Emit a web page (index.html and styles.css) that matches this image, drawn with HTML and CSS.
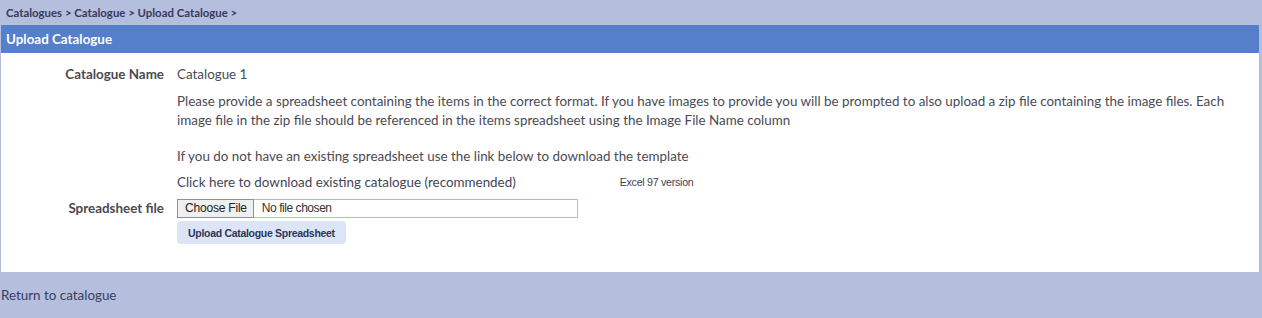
FILE: index.html
```html
<!doctype html>
<html>
<head>
    <meta charset="utf-8">
    <title>Upload Catalogue</title>
    <link rel="stylesheet" href="styles.css">
</head>
<body>
    <div class="breadcrumb">
        <a href="#">Catalogues</a> &gt; <a href="#">Catalogue</a> &gt; <a href="#">Upload Catalogue</a> &gt;
    </div>

    <div class="panel">
        <div class="panel-title">Upload Catalogue</div>
        <div class="panel-body">
            <div class="row">
                <div class="label">Catalogue Name</div>
                <div class="value">Catalogue 1</div>
            </div>
            <div class="row">
                <div class="label"></div>
                <div class="value">
                    <p class="info">Please provide a spreadsheet containing the items in the correct format. If you have images to provide you will be prompted to also upload a zip file containing the image files. Each image file in the zip file should be referenced in the items spreadsheet using the Image File Name column</p>
                    <p class="info">If you do not have an existing spreadsheet use the link below to download the template</p>
                    <div class="download">
                        <a href="#" class="download-link">Click here to download existing catalogue (recommended)</a>
                        <a href="#" class="excel">Excel 97 version</a>
                    </div>
                </div>
            </div>
            <div class="row file-row">
                <div class="label">Spreadsheet file</div>
                <div class="value">
                    <div class="file-input">
                        <span class="choose">Choose File</span>
                        <span class="chosen">No file chosen</span>
                    </div>
                    <button class="upload-btn">Upload Catalogue Spreadsheet</button>
                </div>
            </div>
        </div>
    </div>

    <div class="footer">
        <a href="#">Return to catalogue</a>
    </div>
</body>
</html>
```

FILE: styles.css
```css
html, body {
    margin: 0;
    background-color: #b4bedd;
    font-family: 'Lato', 'Open Sans', sans-serif;
    color: #4a4a55;
}

a {
    color: inherit;
    text-decoration: none;
}

.breadcrumb {
    height: 25px;
    line-height: 25px;
    padding-left: 6px;
    font-size: 11.4px;
    font-weight: bold;
    color: #3a3a5c;
}

.panel {
    margin: 0 3px 0 1px;
    background: #fff;
}

.panel-title {
    height: 28px;
    line-height: 28px;
    padding-left: 5px;
    background: #557ecb;
    color: #fff;
    font-size: 13.4px;
    font-weight: bold;
}

.panel-body {
    padding: 12px 0 28px;
    font-size: 13.4px;
}

.row {
    display: flex;
    gap: 13px;
}

.label {
    width: 163px;
    flex: none;
    text-align: right;
    font-weight: bold;
    color: #4a4a52;
    line-height: 19px;
}

.value {
    line-height: 19px;
    padding-right: 20px;
}

.info {
    margin: 8px 0 17px;
}

.info + .info {
    margin-bottom: 7px;
}

.download {
    display: flex;
    align-items: center;
}

.download-link {
    color: #444458;
}

.excel {
    margin-left: 104px;
    font-family: 'Liberation Sans', Arial, sans-serif;
    font-size: 10.6px;
    letter-spacing: -0.25px;
    color: #3c3c55;
}

.file-row {
    margin-top: 7px;
}

.file-input {
    display: flex;
    width: 399px;
    height: 17px;
    border: 1px solid #a7bde8;
    font-family: 'Liberation Sans', Arial, sans-serif;
    font-size: 12px;
    letter-spacing: -0.2px;
    color: #222;
    line-height: 17px;
}

.choose {
    padding: 0 6px 0 7px;
    background: #efefef;
    border: 1px solid #8f8f9d;
    margin: -1px 0 -1px -1px;
    line-height: 17px;
}

.chosen {
    padding-left: 8px;
    letter-spacing: -0.45px;
    color: #333;
}

.upload-btn {
    display: block;
    margin-top: 3px;
    height: 23px;
    padding: 0 11px;
    border: none;
    border-radius: 4px;
    background: #dce5f8;
    font-family: 'Liberation Sans', Arial, sans-serif;
    font-size: 10.5px;
    font-weight: bold;
    letter-spacing: -0.3px;
    color: #2e3557;
}

.footer {
    padding: 15px 1px;
    font-size: 13.4px;
    color: #3c3c5e;
}
```
